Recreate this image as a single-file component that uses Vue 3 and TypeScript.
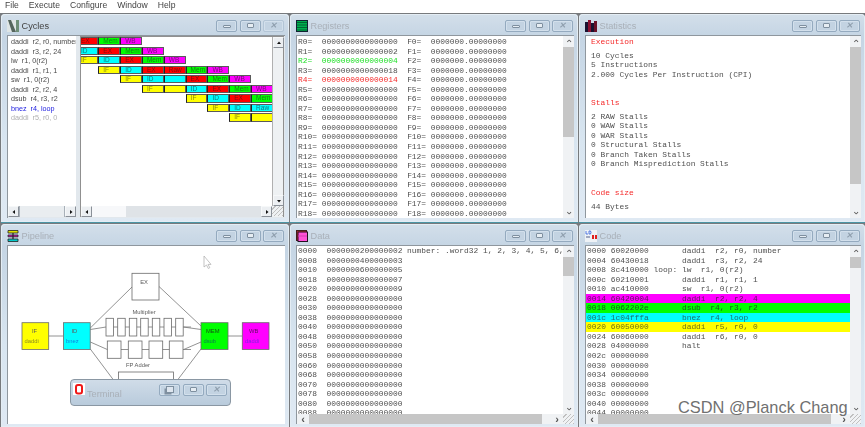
<script setup lang="ts">
const z16 = '0000000000000000'
const regVals: Record<number, string> = { 1: '0000000000000002', 2: '0000000000000004', 3: '0000000000000018', 4: '0000000000000014' }
const regs = Array.from({ length: 19 }, (_, i) => ({
  a: `R${i}=`.padEnd(5, ' ') + (regVals[i] ?? z16),
  f: `F${i}=`.padEnd(5, ' ') + '0000000.00000000',
  c: i === 2 ? 'green' : i === 4 ? 'red' : '',
}))
const dataVals = ['0000000200000002', '0000000400000003', '0000000600000005', '0000000800000007', '0000000000000009']
const dataRows = Array.from({ length: 18 }, (_, i) => {
  const addr = (i * 8).toString(16).padStart(4, '0')
  return `${addr}  ${dataVals[i] ?? z16}` + (i === 0 ? ' number: .word32 1, 2, 3, 4, 5, 6,' : '')
})
const codeRows: { t: string; c?: string }[] = [
  { t: '0000 60020000       daddi  r2, r0, number' },
  { t: '0004 60430018       daddi  r3, r2, 24' },
  { t: '0008 8c410000 loop: lw  r1, 0(r2)' },
  { t: '000c 60210001       daddi  r1, r1, 1' },
  { t: '0010 ac410000       sw  r1, 0(r2)' },
  { t: '0014 60420004       daddi  r2, r2, 4', c: 'magenta' },
  { t: '0018 0062202e       dsub  r4, r3, r2', c: 'lime' },
  { t: '001c 1c04fffa       bnez  r4, loop', c: 'cyan' },
  { t: '0020 60050000       daddi  r5, r0, 0', c: 'yellow' },
  { t: '0024 60060000       daddi  r6, r0, 0' },
  { t: '0028 04000000       halt' },
  ...['002c', '0030', '0034', '0038', '003c', '0040', '0044'].map((a) => ({ t: `${a} 00000000` })),
]
const instrs = [
  { t: 'daddi  r2, r0, number' }, { t: 'daddi  r3, r2, 24' }, { t: 'lw  r1, 0(r2)' },
  { t: 'daddi  r1, r1, 1' }, { t: 'sw  r1, 0(r2)' }, { t: 'daddi  r2, r2, 4' },
  { t: 'dsub  r4, r3, r2' }, { t: 'bnez  r4, loop', c: 'blue' }, { t: 'daddi  r5, r0, 0', c: 'grey' },
]
type Cell = [number, string, string]
const gantt: Cell[][] = [
  [[0, 'EX', 'r'], [1, 'Mem', 'g'], [2, 'WB', 'm']],
  [[0, 'ID', 'c'], [1, 'EX', 'r'], [2, 'Mem', 'g'], [3, 'WB', 'm']],
  [[0, 'IF', 'y'], [1, 'ID', 'c'], [2, 'EX', 'r'], [3, 'Mem', 'g'], [4, 'WB', 'm']],
  [[1, 'IF', 'y'], [2, 'ID', 'c'], [3, 'EX', 'r'], [4, 'Raw', 'r'], [5, 'Mem', 'g'], [6, 'WB', 'm']],
  [[2, 'IF', 'y'], [3, 'ID', 'c'], [4, '', 'c'], [5, 'EX', 'r'], [6, 'Mem', 'g'], [7, 'WB', 'm']],
  [[3, 'IF', 'y'], [4, '', 'y'], [5, 'ID', 'c'], [6, 'EX', 'r'], [7, 'Mem', 'g'], [8, 'WB', 'm']],
  [[5, 'IF', 'y'], [6, 'ID', 'c'], [7, 'EX', 'r'], [8, 'Mem', 'g']],
  [[6, 'IF', 'y'], [7, 'ID', 'c'], [8, 'Raw', 'c']],
  [[7, 'IF', 'y'], [8, '', 'y']],
]
const ganttCells = gantt.flatMap((row, r) =>
  row.map(([col, label, color]) => ({ key: `${r}-${col}`, label, color, area: `${r + 1} / ${col + 1}`, clip: col === 0 })),
)
const menu = ['File', 'Execute', 'Configure', 'Window', 'Help']
const mulBoxes = [106, 117.7, 129.3, 140.7, 152.3, 164, 175.7]
const addBoxes = [107.3, 128.3, 149, 169.3]
</script>

<template>
  <div class="page">
    <div class="soft">
      <nav class="menu"><span v-for="m in menu" :key="m">{{ m }}</span></nav>
      <main class="desk">
        <!-- Cycles -->
        <section class="win top">
          <header class="bar">
            <svg class="ico" viewBox="0 0 12 12"><rect width="12" height="12" fill="#dfe5e5" /><path d="M1 0h3l5 12H5z" fill="#56665e" /><path d="M9 0h3v12H9z" fill="#6f8f78" /></svg>
            <span class="title active">Cycles</span>
            <span class="btns"><i class="b"><u class="min"></u></i><i class="b"><u class="max"></u></i><i class="b faint"><u class="cls">✕</u></i></span>
          </header>
          <div class="client split">
            <div class="list-col">
              <div class="list">
                <div v-for="(ins, i) in instrs" :key="i" class="ins" :class="ins.c">{{ ins.t }}</div>
              </div>
              <div class="classic-h">
                <span class="cbtn"><svg viewBox="0 0 6 6"><path d="M4 1v4L1.5 3z" /></svg></span>
                <span class="ctrack thumbed"></span>
                <span class="cbtn"><svg viewBox="0 0 6 6"><path d="M2 1v4l2.5-2z" /></svg></span>
              </div>
            </div>
            <div class="gantt-col">
              <div class="gantt-main">
                <div class="gantt">
                  <div v-for="c in ganttCells" :key="c.key" class="cell" :class="[c.color, { clip: c.clip }]" :style="{ gridArea: c.area }">{{ c.label }}</div>
                </div>
                <div class="classic-v">
                  <span class="cbtn"><svg viewBox="0 0 6 6"><path d="M1 4h4L3 1.5z" /></svg></span>
                  <span class="ctrack"></span>
                  <span class="cbtn"><svg viewBox="0 0 6 6"><path d="M1 2h4L3 4.5z" /></svg></span>
                </div>
              </div>
              <div class="classic-h">
                <span class="cbtn"><svg viewBox="0 0 6 6"><path d="M4 1v4L1.5 3z" /></svg></span>
                <span class="ctrack bigthumb"></span>
                <span class="cbtn"><svg viewBox="0 0 6 6"><path d="M2 1v4l2.5-2z" /></svg></span>
                <span class="grip"></span>
              </div>
            </div>
          </div>
        </section>

        <!-- Registers -->
        <section class="win top">
          <header class="bar">
            <svg class="ico" viewBox="0 0 12 12"><rect width="12" height="12" fill="#00b050" /><path d="M0 2.500h12M0 5h12M0 7.500h12M0 10h12" stroke="#063" stroke-width="1" /><rect x=".5" y=".5" width="11" height="11" fill="none" stroke="#123" /></svg>
            <span class="title">Registers</span>
            <span class="btns"><i class="b"><u class="min"></u></i><i class="b"><u class="max"></u></i><i class="b"><u class="cls">✕</u></i></span>
          </header>
          <div class="client">
            <div class="mono reg-pane">
              <div v-for="(r, i) in regs" :key="i" class="line"><span :class="r.c">{{ r.a }}</span>{{ '  ' + r.f }}</div>
            </div>
            <div class="vbar">
              <span class="arrow">⌃</span>
              <span class="vtrack"><b class="vthumb reg-thumb"></b></span>
              <span class="arrow down">⌃</span>
            </div>
          </div>
        </section>

        <!-- Statistics -->
        <section class="win top">
          <header class="bar">
            <svg class="ico" viewBox="0 0 12 12"><path d="M0 2h3v10H0z" fill="#1a1230" /><path d="M3 0h3v12H3z" fill="#8a1030" /><path d="M6 3h3v9H6z" fill="#1a1230" /><path d="M9 1h3v11H9z" fill="#6a1028" /></svg>
            <span class="title">Statistics</span>
            <span class="btns"><i class="b"><u class="min"></u></i><i class="b"><u class="max"></u></i><i class="b"><u class="cls">✕</u></i></span>
          </header>
          <div class="client">
            <div class="mono stat-pane">
              <div class="line red head">Execution</div>
              <div class="block">
                <div class="line">10 Cycles</div>
                <div class="line">5 Instructions</div>
                <div class="line">2.000 Cycles Per Instruction (CPI)</div>
              </div>
              <div class="line red head">Stalls</div>
              <div class="block">
                <div class="line">2 RAW Stalls</div>
                <div class="line">0 WAW Stalls</div>
                <div class="line">0 WAR Stalls</div>
                <div class="line">0 Structural Stalls</div>
                <div class="line">0 Branch Taken Stalls</div>
                <div class="line">0 Branch Misprediction Stalls</div>
              </div>
              <div class="line red head">Code size</div>
              <div class="line">44 Bytes</div>
            </div>
            <div class="vbar">
              <span class="arrow">⌃</span>
              <span class="vtrack"><b class="vthumb stat-thumb"></b></span>
              <span class="arrow down">⌃</span>
            </div>
          </div>
        </section>

        <!-- Pipeline -->
        <section class="win">
          <header class="bar">
            <svg class="ico" viewBox="0 0 12 12"><path d="M1 .5h10v2.500H1z" fill="#e0e000" stroke="#222" stroke-width=".8" /><path d="M1 5h10v1.800H1z" fill="#e010c0" stroke="#222" stroke-width=".8" /><path d="M1 9h10v2.500H1z" fill="#00c8c8" stroke="#222" stroke-width=".8" /><path d="M6 3v6" stroke="#222" stroke-width="1.200" /></svg>
            <span class="title">Pipeline</span>
            <span class="btns"><i class="b"><u class="min"></u></i><i class="b"><u class="max"></u></i><i class="b"><u class="cls">✕</u></i></span>
          </header>
          <div class="client pipe">
            <svg class="diagram" width="276" height="178" viewBox="8 245 276 178">
              <g stroke="#777" stroke-width=".8" fill="none">
                <path d="M48.700 335H63.300M228 335H242.300" />
                <path d="M90.300 327L132 286M159 285.500L201 325" />
                <path d="M90.300 328.500L106 326M183.300 326L201 328.500" />
                <path d="M90.300 341L107.300 348.500M183.700 348.500L201 341" />
                <path d="M90.300 348L118 385M173 385L201 348" />
                <path d="M106 326H191M107 348.500H191" />
              </g>
              <rect x="132" y="272.300" width="27" height="26.700" class="box white" />
              <text x="144" y="283" class="lab" text-anchor="middle">EX</text>
              <text x="144" y="313" class="lab" text-anchor="middle">Multiplier</text>
              <rect v-for="x in mulBoxes" :key="x" :x="x" y="317.300" width="7.500" height="17.700" class="box white" />
              <rect v-for="x in addBoxes" :key="x" :x="x" y="340" width="13.700" height="17.300" class="box white" />
              <text x="138" y="366" class="lab" text-anchor="middle">FP Adder</text>
              <rect x="118.500" y="371" width="55" height="20" class="box white" />
              <rect x="22" y="321.700" width="26.700" height="26.700" class="box" fill="#ffff00" />
              <text x="32" y="332" class="lab">IF</text>
              <text x="24.500" y="341.500" class="lab" style="fill:#8c8c20">daddi</text>
              <rect x="63.500" y="321.700" width="26.700" height="26.700" class="box" fill="#00ffff" />
              <text x="71.500" y="332" class="lab">ID</text>
              <text x="66" y="341.500" class="lab" style="fill:#1080e0">bnez</text>
              <rect x="201" y="321.700" width="27" height="26.700" class="box" fill="#00ff00" />
              <text x="206" y="332" class="lab" style="fill:#145014">MEM</text>
              <text x="203.500" y="341.500" class="lab" style="fill:#0a7a50">dsub</text>
              <rect x="242.300" y="321.700" width="26.700" height="26.700" class="box" fill="#ff00ff" />
              <text x="249" y="332" class="lab" style="fill:#601060">WB</text>
              <text x="245" y="341.500" class="lab" style="fill:#8020e0">daddi</text>
              <path d="M204 255v11l2.500-2 1.800 3.500 1.500-.8-1.800-3.300h3z" fill="#fff" stroke="#aaa" stroke-width=".7" />
            </svg>
            <div class="terminal">
              <svg class="ico term-ico" viewBox="0 0 12 12"><rect width="12" height="12" fill="#fff" /><rect x="3" y="2" width="6" height="8.500" rx="2" fill="none" stroke="#f01818" stroke-width="2" /></svg>
              <span class="title term-title">Terminal</span>
              <span class="btns"><i class="b"><u class="rest"></u></i><i class="b"><u class="max"></u></i><i class="b"><u class="cls">✕</u></i></span>
            </div>
          </div>
        </section>

        <!-- Data -->
        <section class="win">
          <header class="bar">
            <svg class="ico" viewBox="0 0 12 12"><rect x=".5" y=".5" width="10" height="10" fill="#c03030" stroke="#402020" /><rect x="2" y="2" width="9.500" height="9.500" fill="#ff50d8" stroke="#201020" /><path d="M2 6h9" stroke="#d040b0" /></svg>
            <span class="title">Data</span>
            <span class="btns"><i class="b"><u class="min"></u></i><i class="b"><u class="max"></u></i><i class="b"><u class="cls">✕</u></i></span>
          </header>
          <div class="client col">
            <div class="upper">
              <div class="mono data-pane">
                <div v-for="(d, i) in dataRows" :key="i" class="line">{{ d }}</div>
              </div>
              <div class="vbar">
                <span class="arrow">⌃</span>
                <span class="vtrack"><b class="vthumb data-thumb"></b></span>
                <span class="arrow down">⌃</span>
              </div>
            </div>
            <div class="hbar">
              <span class="harrow">‹</span>
              <span class="htrack"><b class="hthumb data-h"></b></span>
              <span class="harrow">›</span>
              <span class="grip"></span>
            </div>
          </div>
        </section>

        <!-- Code -->
        <section class="win">
          <header class="bar">
            <svg class="ico" viewBox="0 0 12 12"><rect width="12" height="12" fill="#eef2f6" /><path d="M1 1v3h2M4 1v3h1.500q1-1.500 0-3z" fill="none" stroke="#3060e0" stroke-width=".8" /><rect x="7" y="5" width="2" height="4" fill="#e02020" /><rect x="10" y="5" width="2" height="4" fill="#e02020" /><rect x="1" y="6" width="4" height="2" fill="#a0a8c0" /></svg>
            <span class="title">Code</span>
            <span class="btns"><i class="b"><u class="min"></u></i><i class="b"><u class="max"></u></i><i class="b"><u class="cls">✕</u></i></span>
          </header>
          <div class="client col">
            <div class="upper">
              <div class="mono code-pane">
                <div v-for="(c, i) in codeRows" :key="i" class="line" :class="c.c ? 'bg-' + c.c : ''">{{ c.t }}</div>
              </div>
              <div class="vbar">
                <span class="arrow">⌃</span>
                <span class="vtrack"><b class="vthumb code-thumb"></b></span>
                <span class="arrow down">⌃</span>
              </div>
            </div>
            <div class="hbar">
              <span class="harrow">‹</span>
              <span class="htrack"><b class="hthumb code-h"></b></span>
              <span class="harrow">›</span>
              <span class="grip"></span>
            </div>
          </div>
        </section>
      </main>
    </div>
    <div class="mark">CSDN @Planck Chang</div>
  </div>
</template>

<style scoped>
.page {
  position: relative;
  width: 865px;
  height: 427px;
  overflow: hidden;
  background: #fff;
  font-family: "Liberation Sans", Arial, sans-serif;
}
.soft {
  width: 866px;
  height: 427px;
  display: flex;
  flex-direction: column;
  filter: blur(0.45px);
}
.menu {
  height: 13px;
  flex: none;
  display: flex;
  gap: 10px;
  padding-left: 5px;
  font-size: 8.600px;
  line-height: 10px;
  color: #444;
  background: #fff;
}
.desk {
  flex: 1;
  display: grid;
  grid-template-columns: 289px 289px 287px;
  grid-template-rows: 210px 204px;
  padding-left: 1px;
  background: #777a7d;
}
.win {
  display: flex;
  flex-direction: column;
  min-width: 0;
  min-height: 0;
  padding: 0 4px 3px 6px;
  margin: 1px 1px 0 0;
  border-radius: 4px 4px 0 0;
  background: linear-gradient(#d3dfea 0, #c5d5e4 22px, #d8e5f0 60%, #dfe9f3 100%);
  box-shadow: inset 0 0 0 1px #e4edf4;
}
.win.top {
  padding-bottom: 4px;
  border-bottom: 1px solid #4b95a5;
}
.bar {
  height: 21px;
  flex: none;
  box-sizing: border-box;
  display: flex;
  align-items: center;
  padding-top: 2px;
}
.ico {
  width: 12px;
  height: 12px;
  flex: none;
}
.title {
  margin-left: 2.500px;
  font-size: 9.200px;
  color: #a9b0b8;
}
.title.active {
  color: #444;
}
.btns {
  margin-left: auto;
  display: flex;
  gap: 2.300px;
  padding-right: 1px;
}
.b {
  width: 21px;
  height: 12px;
  display: flex;
  align-items: center;
  justify-content: center;
  border: 1px solid #94aabf;
  border-radius: 2px;
  background: #c3d3e2;
  box-shadow: inset 0 0 0 1px #d3e0ec;
  box-sizing: border-box;
}
.b.faint {
  border-color: #b3c5d6;
}
.b u {
  display: block;
  text-decoration: none;
}
.min {
  width: 8px;
  height: 3px;
  box-sizing: border-box;
  border: 1px solid #7e8f9f;
  border-radius: 1px;
  background: #e6edf3;
  margin-top: 2px;
}
.max {
  width: 7px;
  height: 5px;
  box-sizing: border-box;
  border: 1px solid #7e8f9f;
  border-radius: 1px;
  background: #e6edf3;
}
.rest {
  width: 6px;
  height: 5px;
  border: 1px solid #7e8f9f;
  box-shadow: -2px 2px 0 -0.500px #8090a0;
  background: #dde5ee;
}
.cls {
  font-size: 8px;
  line-height: 8px;
  font-weight: 700;
  color: #8f9fae;
}
.client {
  flex: 1;
  min-height: 0;
  display: flex;
  background: #fff;
  border: 1px solid #8f979e;
  border-width: 1px 0 0 1px;
  overflow: hidden;
  position: relative;
}
.col {
  flex-direction: column;
}
.upper {
  flex: 1;
  min-height: 0;
  display: flex;
}
.mono {
  flex: 1;
  min-width: 0;
  overflow: hidden;
  font-family: "Liberation Mono", "Courier New", monospace;
  font-size: 7.920px;
  color: #505050;
  white-space: pre;
}
.line {
  height: 9.550px;
  line-height: 9.550px;
}
.reg-pane {
  padding: 1px 0 0 1px;
}
.stat-pane {
  padding: 1px 0 0 5px;
}
.data-pane {
  padding-left: 1px;
}
.code-pane .line {
  padding-left: 1px;
}
.red {
  color: #f52a2a;
}
.green {
  color: #22e02a;
}
.head {
  margin-bottom: 4px;
}
.block {
  margin-bottom: 19px;
}
.bg-magenta {
  background: #ff00ff;
  color: #5a145a;
}
.bg-lime {
  background: #00ff00;
  color: #145a14;
}
.bg-cyan {
  background: #00ffff;
  color: #1a7070;
}
.bg-yellow {
  background: #ffff00;
  color: #707010;
}
.vbar {
  width: 11px;
  flex: none;
  display: flex;
  flex-direction: column;
  background: #f0f2f4;
}
.arrow {
  height: 11px;
  flex: none;
  font-size: 10px;
  line-height: 16px;
  text-align: center;
  color: #555;
}
.arrow.down {
  transform: scaleY(-1);
}
.vtrack {
  flex: 1;
  display: block;
}
.vthumb {
  display: block;
  background: #c6c6c6;
}
.reg-thumb {
  height: 90px;
}
.stat-thumb {
  height: 137px;
}
.data-thumb {
  height: 19px;
}
.code-thumb {
  height: 11px;
}
.hbar {
  height: 10px;
  flex: none;
  display: flex;
  align-items: center;
  background: #f0f2f4;
}
.harrow {
  width: 12px;
  flex: none;
  font-size: 11px;
  line-height: 9px;
  font-weight: 700;
  text-align: center;
  color: #555;
}
.htrack {
  flex: 1;
  height: 10px;
}
.hthumb {
  display: block;
  height: 10px;
  background: #c6c6c6;
}
.data-h,
.code-h {
  width: 233px;
}
.grip {
  width: 11px;
  height: 10px;
  flex: none;
  background: repeating-linear-gradient(135deg, transparent 0 2px, #c0c0c0 2px 3px);
}
.split {
  padding: 0 1px 1px 0;
  background: #e2e8ed;
  gap: 4px;
}
.list-col {
  width: 68px;
  flex: none;
  display: flex;
  flex-direction: column;
  background: #fff;
}
.list {
  flex: 1;
  min-height: 0;
  overflow: hidden;
  padding: 1px 0 0 3px;
  white-space: pre;
  font-size: 7.200px;
  color: #4a4a4a;
}
.ins {
  height: 9.550px;
  line-height: 9.550px;
}
.blue {
  color: #2222e0;
}
.grey {
  color: #b0b0b0;
}
.gantt-col {
  flex: 1;
  min-width: 0;
  display: flex;
  flex-direction: column;
  background: #fff;
  border: 1px solid #909090;
  border-width: 1px 1px 0 1px;
}
.gantt-main {
  flex: 1;
  min-height: 0;
  display: flex;
}
.gantt {
  flex: 1;
  min-width: 0;
  display: grid;
  grid-template-columns: 17.300px repeat(8, 21.830px);
  grid-auto-rows: 9.550px;
  align-content: start;
  overflow: hidden;
}
.cell {
  height: 8.300px;
  box-sizing: border-box;
  border: 1px solid #5a5a5a;
  border-left-color: #222;
  font-size: 6.500px;
  line-height: 6.600px;
  padding-left: 4px;
  overflow: hidden;
  white-space: nowrap;
}
.cell.clip {
  border-left: 0;
  padding-left: 0;
}
.r {
  background: #ff0000;
  color: #7a1010;
}
.g {
  background: #00ff00;
  color: #147a14;
}
.m {
  background: #ff00ff;
  color: #701070;
}
.c {
  background: #00ffff;
  color: #107878;
}
.y {
  background: #ffff00;
  color: #8a8a10;
}
.classic-v {
  width: 11px;
  flex: none;
  display: flex;
  flex-direction: column;
  background: #eef1f3;
  border-left: 1px solid #b0b0b0;
  box-sizing: border-box;
}
.classic-h {
  height: 11px;
  flex: none;
  display: flex;
  background: #eef1f3;
}
.cbtn {
  width: 11px;
  height: 11px;
  flex: none;
  display: flex;
  align-items: center;
  justify-content: center;
  box-sizing: border-box;
  background: #eceff2;
  border: 1px solid #a8b0b8;
  border-color: #f6f8f9 #8a9098 #8a9098 #f6f8f9;
}
.cbtn svg {
  width: 6px;
  height: 6px;
  fill: #111;
}
.ctrack {
  flex: 1;
}
.thumbed {
  background: #e9edf0;
  border: 1px solid #a8b0b8;
  border-width: 0 1px;
}
.bigthumb {
  background: linear-gradient(90deg, #f7f8fa 0 34px, #dfe3e7 34px);
}
.pipe {
  display: block;
}
.diagram {
  display: block;
}
.lab {
  font-size: 5.800px;
  fill: #5c5c5c;
}
.box {
  stroke: #6a6a6a;
  stroke-width: 0.800;
}
.white {
  fill: #fff;
}
.terminal {
  position: absolute;
  left: 62px;
  top: 133px;
  width: 161px;
  height: 27px;
  box-sizing: border-box;
  display: flex;
  align-items: center;
  padding: 0 2px 6px 2px;
  border: 1px solid #8a97a3;
  border-radius: 4px;
  background: linear-gradient(#d0dce8, #b9cbdc);
}
.term-ico {
  margin-top: -1px;
}
.term-title {
  margin-top: 8px;
  margin-left: 2px;
  font-size: 9.200px;
}
.mark {
  position: absolute;
  left: 678px;
  top: 398px;
  font-size: 16.400px;
  line-height: 19px;
  color: #707070;
  white-space: nowrap;
}
</style>
